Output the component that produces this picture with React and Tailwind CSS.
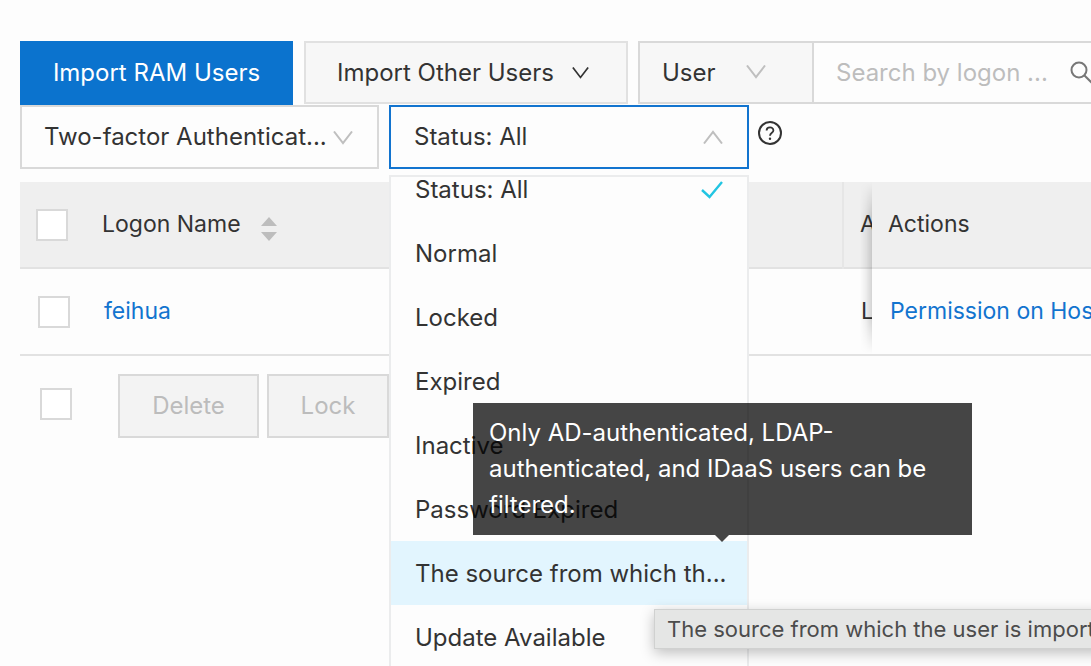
import React from "react";

const statuses = [
  "Status: All",
  "Normal",
  "Locked",
  "Expired",
  "Inactive",
  "Password Expired",
  "The source from which th...",
  "Update Available",
];

function Chevron({ up = false, className = "" }) {
  return (
    <svg viewBox="0 0 20 14" className={className} fill="none" stroke="currentColor" strokeWidth="2" aria-hidden="true">
      <path d={up ? "M1 13.5L10 1.8L19 13.5" : "M1 .5L10 12.2L19 .5"} />
    </svg>
  );
}

function Checkbox({ label }) {
  return (
    <input
      type="checkbox"
      aria-label={label}
      className="block size-8 shrink-0 appearance-none border-2 border-[#d9d9d9] bg-white"
    />
  );
}

function Toolbar() {
  return (
    <div className="flex h-16 items-start">
      <button className="h-16 w-[273px] shrink-0 bg-[#0b73ce] text-white">Import RAM Users</button>
      <button className="ml-[11px] flex h-[63px] w-[324px] shrink-0 items-center border-2 border-[#e1e1e1] bg-[#f7f7f7] pl-[31px]">
        Import Other Users
        <Chevron className="ml-[18px] h-3 w-[17px]" />
      </button>
      <div className="ml-[10px] flex h-[63px] w-[480px] shrink-0 border-2 border-[#d9d9d9]">
        <div className="relative flex w-[174px] border-r-2 border-[#d9d9d9] bg-[#f7f7f7]">
          <select aria-label="Search by" className="w-full appearance-none bg-transparent pl-[22px] outline-none">
            <option>User</option>
          </select>
          <Chevron className="pointer-events-none absolute top-[22px] right-[46px] h-[14px] w-5 text-[#bfbfbf]" />
        </div>
        <input
          aria-label="Search by logon name"
          placeholder="Search by logon ..."
          className="w-[254px] bg-transparent pl-[22px] outline-none placeholder:text-[#bdbdbd]"
        />
        <button aria-label="Search" className="pl-[2px] text-[#777]">
          <svg viewBox="0 0 24 24" className="size-6" fill="none" stroke="currentColor" strokeWidth="2" aria-hidden="true">
            <circle cx="9" cy="9" r="7.5" />
            <path d="M14.5 14.5L23 23" />
          </svg>
        </button>
      </div>
    </div>
  );
}

function StatusFilter() {
  return (
    <div className="relative z-10 w-[360px] shrink-0">
      <button
        aria-haspopup="listbox"
        aria-expanded="true"
        className="flex h-16 w-full items-center justify-between border-2 border-[#1274cf] bg-[#fdfdfd] pr-6 pl-[23px]"
      >
        Status: All
        <Chevron up className="h-[14px] w-5 text-[#bfbfbf]" />
      </button>
      <div className="absolute top-full left-0 mt-[6px] w-full overflow-hidden border-2 border-[#ebeced] bg-[#fdfdfd]">
        <ul role="listbox" aria-label="Status" className="-mt-5">
          {statuses.map((status, i) => (
            <li
              key={status}
              role="option"
              aria-selected={i === 0}
              className={
                "flex h-16 items-center justify-between px-6 pt-px whitespace-nowrap " + (i === 6 ? "bg-[#e2f5fe]" : "")
              }
            >
              {status}
              {i === 0 && (
                <svg viewBox="0 0 22 18" className="h-[18px] w-[22px]" fill="none" stroke="#22c5e2" strokeWidth="2.4" aria-hidden="true">
                  <path d="M1 9L8.5 16L21 1" />
                </svg>
              )}
            </li>
          ))}
        </ul>
      </div>
      <div role="tooltip" className="absolute top-[298px] left-[84px] w-[499px] bg-black/73 px-4 py-3 leading-9 text-white">
        Only AD-authenticated, LDAP-authenticated, and IDaaS users can be filtered.
        <svg viewBox="0 0 14 7" className="absolute top-full left-[242px] h-[7px] w-[14px]" aria-hidden="true">
          <path d="M0 0H14L7 7Z" fill="#000" fillOpacity=".73" />
        </svg>
      </div>
      <div className="absolute top-[504px] left-[265px] w-[500px] border border-[#d0d1d0] bg-[#e5e6e5] pl-3 text-[22px] leading-[38px] whitespace-nowrap text-[#4c4c4c] shadow-[0_4px_14px_rgba(0,0,0,0.25)]">
        The source from which the user is imported
      </div>
    </div>
  );
}

function UserTable() {
  return (
    <table className="w-full table-fixed border-collapse text-left text-[23px]">
      <colgroup>
        <col className="w-[66px]" />
        <col />
        <col className="w-[29px]" />
        <col className="w-[219px]" />
      </colgroup>
      <thead>
        <tr className="h-[86px] border-b-2 border-[#e2e2e2] bg-[#efefef]">
          <th className="pl-4">
            <Checkbox label="Select all users" />
          </th>
          <th className="pl-4 font-normal">
            <div className="flex items-center">
              Logon Name
              <svg viewBox="0 0 16 24" className="mt-2 ml-5 h-6 w-4" fill="#bdbdbd" aria-hidden="true">
                <path d="M0 9L8 0L16 9ZM0 15H16L8 24Z" />
              </svg>
            </div>
          </th>
          <th className="overflow-hidden border-l-2 border-[#e6e6e6] pl-4 font-normal">A</th>
          <th className="relative pl-4 font-normal">
            <span className="pointer-events-none absolute top-0 right-full h-[172px] w-3 bg-linear-to-l from-black/16 via-black/6 to-transparent mask-y-from-80%" />
            Actions
          </th>
        </tr>
      </thead>
      <tbody>
        <tr className="h-[87px] border-b-2 border-[#e2e2e2]">
          <td className="pl-[18px]">
            <Checkbox label="Select feihua" />
          </td>
          <td className="pl-[18px]">
            <a href="#feihua" className="text-[#1274cf]">feihua</a>
          </td>
          <td className="overflow-hidden pl-[18px]">L</td>
          <td className="overflow-hidden pl-[18px] whitespace-nowrap">
            <a href="#hosts" className="text-[#1274cf]">Permission on Hosts</a>
          </td>
        </tr>
      </tbody>
    </table>
  );
}

export default function App() {
  return (
    <main className="min-h-screen overflow-hidden bg-[#fdfdfd] pt-[41px] pl-5 font-['Inter',sans-serif] text-[24px] text-[#333]">
      <Toolbar />
      <div className="flex items-start">
        <div className="relative h-16 w-[359px] shrink-0 border-2 border-[#d9d9d9]">
          <select aria-label="Authentication filter" className="h-full w-full appearance-none bg-transparent pl-[22px] outline-none">
            <option>Two-factor Authenticat...</option>
          </select>
          <Chevron className="pointer-events-none absolute top-6 right-6 h-[14px] w-5 text-[#bfbfbf]" />
        </div>
        <div className="ml-[10px] flex">
          <StatusFilter />
        </div>
        <button aria-label="Help" className="mt-4 ml-[9px]">
          <svg viewBox="0 0 24 24" className="size-6" fill="none" stroke="currentColor" strokeWidth="2" aria-hidden="true">
            <circle cx="12" cy="12" r="11" />
            <path d="M8.6 9.6C8.6 5.4 15.4 5.4 15.4 9.4C15.4 11.8 12 11.7 12 14.8" strokeWidth="1.8" />
            <circle cx="12" cy="17.8" r="1.2" fill="currentColor" stroke="none" />
          </svg>
        </button>
      </div>
      <div className="mt-[13px]">
        <UserTable />
      </div>
      <div className="mt-[18px] flex items-start pl-5">
        <div className="pt-[14px]">
          <Checkbox label="Select all on page" />
        </div>
        <button disabled className="ml-[46px] h-16 w-[141px] border-2 border-[#d9d9d9] bg-[#f3f3f3] text-[#bcbcbc]">Delete</button>
        <button disabled className="ml-2 h-16 w-[122px] border-2 border-[#d9d9d9] bg-[#f3f3f3] text-[#bcbcbc]">Lock</button>
      </div>
    </main>
  );
}
